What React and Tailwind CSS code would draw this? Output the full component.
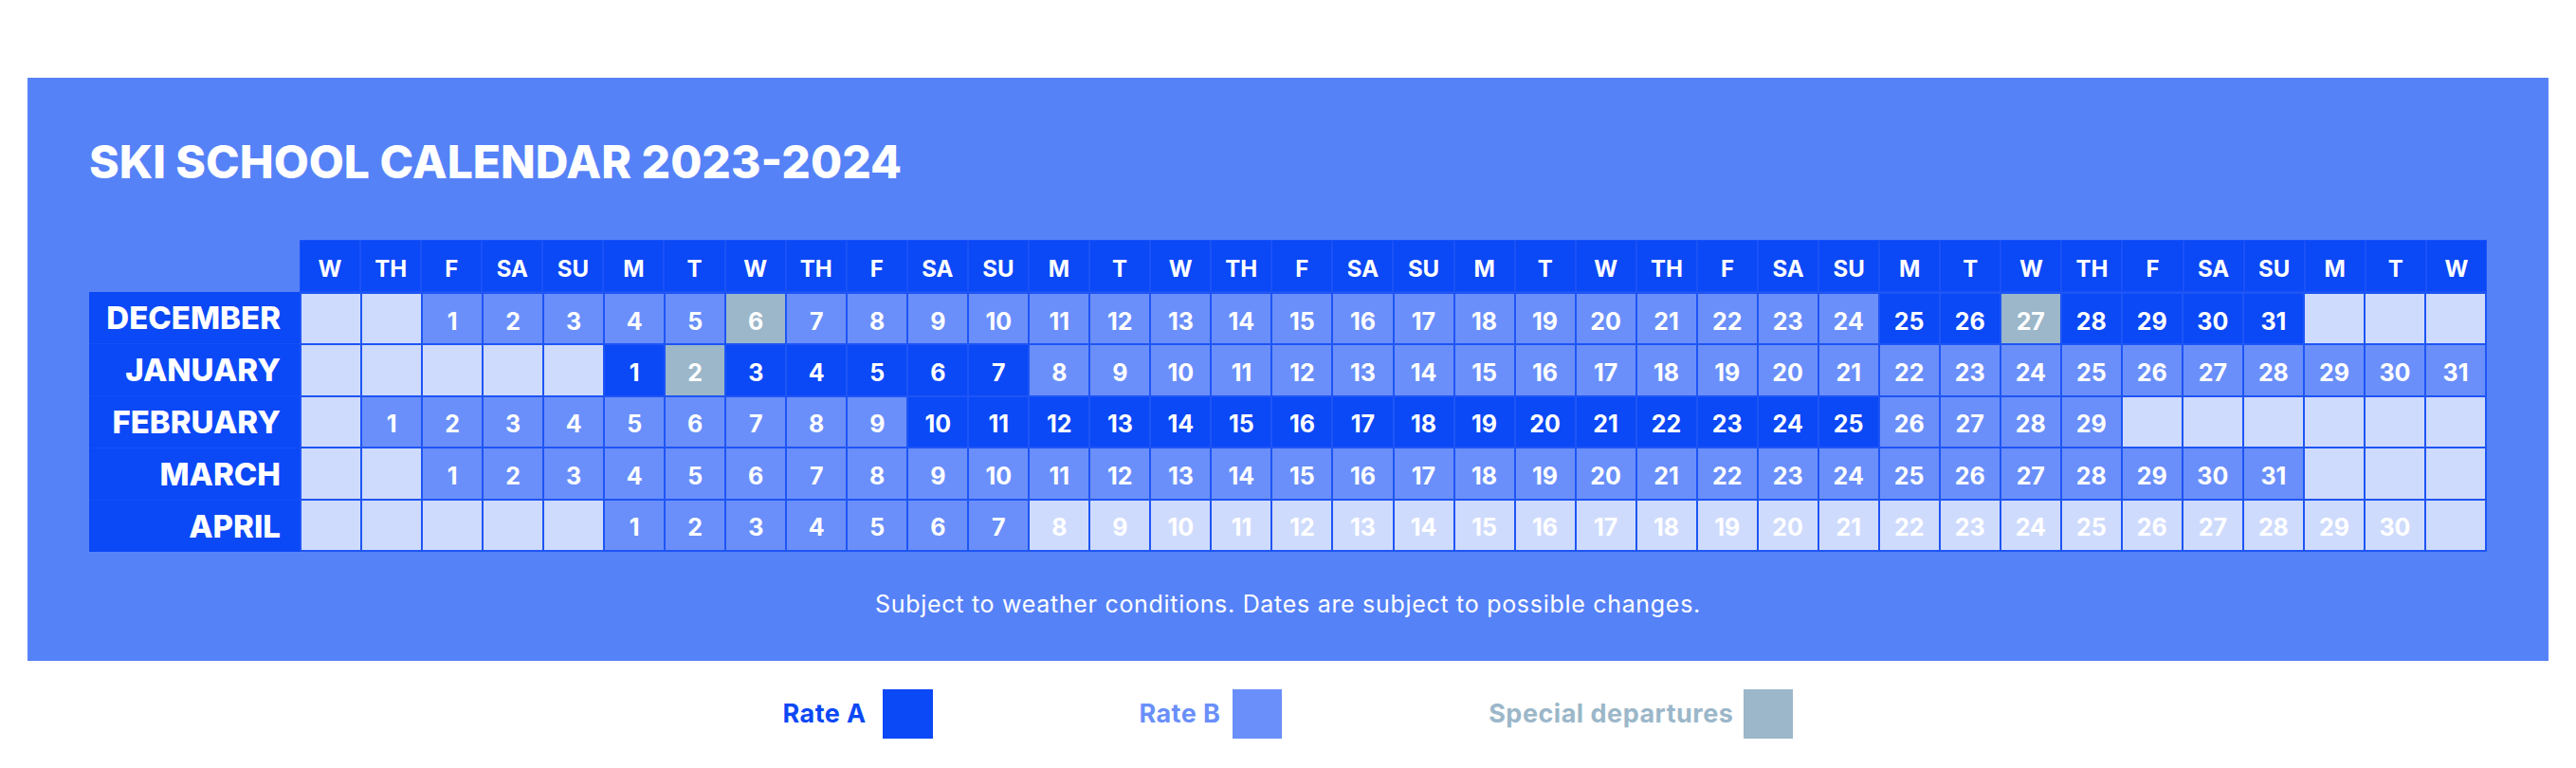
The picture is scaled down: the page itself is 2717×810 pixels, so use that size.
import React from "react";

const DAYS = ["W", "TH", "F", "SA", "SU", "M", "T"];
const HEADERS = Array.from({ length: 36 }, (_, i) => DAYS[i % 7]);

// type: A = rate A, B = rate B, S = special, L = light (outside season, but a date)
const MONTHS = [
  {
    name: "DECEMBER",
    start: 2,
    days: 31,
    type: (d) => (d === 6 || d === 27 ? "S" : d >= 25 ? "A" : "B"),
  },
  {
    name: "JANUARY",
    start: 5,
    days: 31,
    type: (d) => (d === 2 ? "S" : d <= 7 ? "A" : "B"),
  },
  {
    name: "FEBRUARY",
    start: 1,
    days: 29,
    type: (d) => (d >= 10 && d <= 25 ? "A" : "B"),
  },
  { name: "MARCH", start: 2, days: 31, type: () => "B" },
  {
    name: "APRIL",
    start: 5,
    days: 30,
    type: (d) => (d <= 7 ? "B" : "L"),
  },
];

const BG = {
  A: "bg-[#0b48f6]",
  B: "bg-[#6a8ffa]",
  S: "bg-[#9bb7c9]",
  L: "bg-[#cfdbfc]",
  E: "bg-[#cfdbfc]",
};

function buildRow(m) {
  const cells = [];
  for (let c = 0; c < 36; c++) {
    const d = c - m.start + 1;
    if (d >= 1 && d <= m.days) cells.push({ d, t: m.type(d) });
    else cells.push({ d: null, t: "E" });
  }
  return cells;
}

export default function App() {
  return (
    <div className="w-[2717px] h-[810px] bg-white pt-[82px] font-['Inter',sans-serif]">
      <section className="mx-[29px] bg-[#5682f8] px-[65px] pt-[65px] pb-[47px]">
        <h1 className="text-[48px] leading-none font-extrabold text-white">
          SKI SCHOOL CALENDAR 2023-2024
        </h1>

        <div className="mt-[58px]">
          <div className="flex">
            <div className="w-[222px] shrink-0" />
            <div className="flex-1 grid grid-cols-[repeat(36,minmax(0,1fr))] gap-[2px] p-[1px] h-[55px] bg-[#1a52f6]">
              {HEADERS.map((h, i) => (
                <div
                  key={i}
                  className="bg-[#0b48f6] flex items-center justify-center pt-[6px] text-[24px] leading-none font-bold text-white"
                >
                  {h}
                </div>
              ))}
            </div>
          </div>

          <div className="flex h-[274px]">
            <div className="w-[222px] shrink-0 bg-[#1450f6] flex flex-col gap-[1px]">
              {MONTHS.map((m) => (
                <div
                  key={m.name}
                  className="flex-1 bg-[#0b48f6] flex items-center justify-end pr-[20px] text-[33px] leading-none font-extrabold text-white"
                >
                  {m.name}
                </div>
              ))}
            </div>
            <div className="flex-1 grid grid-cols-[repeat(36,minmax(0,1fr))] grid-rows-5 gap-[2px] p-[2px] bg-[#1e55f5]">
              {MONTHS.map((m) =>
                buildRow(m).map((c, i) => (
                  <div
                    key={m.name + i}
                    className={`${BG[c.t]} flex items-center justify-center pt-[6px] text-[25px] leading-none font-bold text-white`}
                  >
                    {c.d}
                  </div>
                ))
              )}
            </div>
          </div>
        </div>

        <p className="mt-[43px] text-center text-[25px] tracking-[0.7px] leading-none text-white">
          Subject to weather conditions. Dates are subject to possible changes.
        </p>
      </section>

      <div className="mt-[30px] flex justify-center gap-[218px]">
        <div className="flex items-center gap-[17px]">
          <span className="text-[27px] tracking-[0.4px] font-bold text-[#0b48f6]">Rate A</span>
          <span className="w-[53px] h-[52px] bg-[#0b48f6]" />
        </div>
        <div className="flex items-center gap-[13px]">
          <span className="text-[27px] tracking-[0.4px] font-bold text-[#6a8ffa]">Rate B</span>
          <span className="w-[52px] h-[52px] bg-[#6a8ffa]" />
        </div>
        <div className="flex items-center gap-[11px]">
          <span className="text-[27px] tracking-[0.5px] font-bold text-[#9bb7c9]">Special departures</span>
          <span className="w-[52px] h-[52px] bg-[#9bb7c9]" />
        </div>
      </div>
    </div>
  );
}
